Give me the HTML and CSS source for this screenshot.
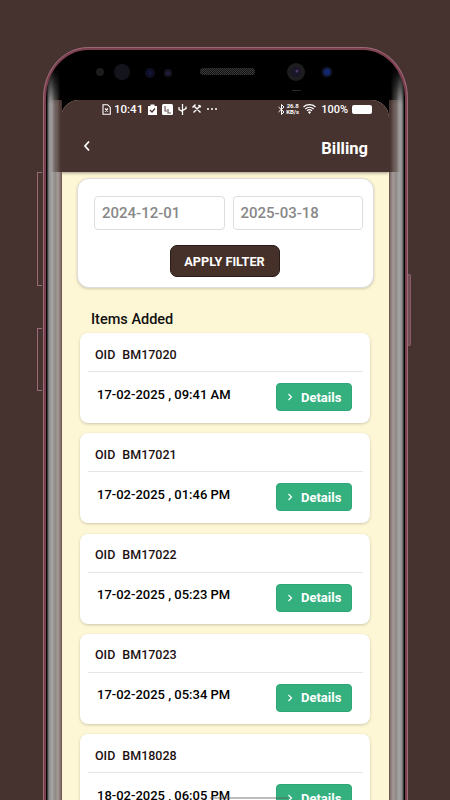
FILE: index.html
```html
<!DOCTYPE html>
<html lang="en">
<head>
    <meta charset="UTF-8">
    <meta name="viewport" content="width=device-width, initial-scale=1.0">
    <title>Billing</title>
    <link rel="stylesheet" href="styles.css">
</head>
<body>
	<div class="buttonLeft buttonLeftTop"></div>
	<div class="buttonLeft buttonLeftBottom"></div>
	<div class="buttonRight"></div>
	<div class="phone">
		<svg class="sensors" width="359" height="50" viewBox="0 0 359 50">
			<defs>
				<pattern id="mesh" width="2" height="2" patternUnits="userSpaceOnUse">
					<rect width="2" height="2" fill="#111"/>
					<rect width="1" height="1" fill="#3c3c3c"/>
					<rect x="1" y="1" width="1" height="1" fill="#3c3c3c"/>
				</pattern>
			</defs>
			<circle cx="54" cy="22" r="4" fill="#1c1c1e"/>
			<circle cx="76" cy="22" r="8" fill="#14141c"/>
			<circle cx="104" cy="23" r="5" fill="#0e0e24"/>
			<circle cx="104" cy="23" r="2" fill="#14143a"/>
			<circle cx="122" cy="23" r="4" fill="#15151f"/>
			<circle cx="122" cy="23" r="1.5" fill="#22224a"/>
			<rect x="154" y="18" width="55" height="7" rx="3" fill="url(#mesh)"/>
			<circle cx="250" cy="22" r="9" fill="#1d1d1f"/>
			<circle cx="250" cy="22" r="5" fill="#1a1528"/>
			<circle cx="251" cy="21" r="1.5" fill="#4a3a6a"/>
			<circle cx="281" cy="22" r="5.5" fill="#10131f"/>
			<circle cx="281" cy="22" r="3.5" fill="#12266e"/>
			<rect x="246" y="40" width="9" height="1" fill="#2a2a2a"/>
		</svg>
		<div class="bezel bezelLeft"></div>
		<div class="bezel bezelRight"></div>
		<div class="screen">
			<header class="appHeader">
				<div class="statusBar">
					<div class="statusGroup">
						<svg width="9" height="11" viewBox="0 0 9 11"><path d="M1 .7h4.600L8.300 3.400V10.300H1z" fill="none" stroke="#fff" stroke-width="1.100"/><path d="M3 4.500l3 3M6 4.500l-3 3" stroke="#fff" stroke-width="1.100"/></svg>
						<span class="statusTime">10:41</span>
						<svg class="gapIcon" width="9" height="11" viewBox="0 0 9 11"><path d="M0 2h2.500V.5h4V2H9v9H0z" fill="#fff"/><path d="M2 6l2 2 3-3.500" fill="none" stroke="#46322e" stroke-width="1.200"/></svg>
						<svg class="gapIcon" width="11" height="11" viewBox="0 0 11 11"><rect width="11" height="11" rx="1.500" fill="#fff"/><path d="M3 2v5h2M6 5v4h3" fill="none" stroke="#6a5a56" stroke-width="1.200"/></svg>
						<svg class="gapIcon" width="9" height="11" viewBox="0 0 9 11"><path d="M4.500 0v11M1 3v2.500l3.500 2M8 2.500v2l-3.500 2" fill="none" stroke="#fff" stroke-width="1.300"/></svg>
						<svg class="gapIcon" width="10" height="10" viewBox="0 0 10 10"><path d="M1.500 1.500l7 7M8.500 1.500l-7 7M.5 3.500l3-3M6.500 1l2.500 2" fill="none" stroke="#fff" stroke-width="1.400"/></svg>
						<span class="statusDots">
							<i></i><i></i><i></i>
						</span>
					</div>
					<div class="statusGroup">
						<svg width="7" height="11" viewBox="0 0 7 11"><path d="M.5 3l5.500 5-2.500 2.500V.5L6 3 .5 8" fill="none" stroke="#fff" stroke-width="1"/></svg>
						<span class="netSpeed"><b>26.8</b><b>KB/s</b></span>
						<svg class="wifi" width="13" height="10" viewBox="0 0 13 10"><path d="M.5 3a9 9 0 0 1 12 0M2.300 5a6.300 6.300 0 0 1 8.400 0M4 6.900a3.600 3.600 0 0 1 5 0" fill="none" stroke="#fff" stroke-width="1.200"/><path d="M6.500 10l-1.500-1.800a2 2 0 0 1 3 0z" fill="#fff"/></svg>
						<span class="statusPct">100%</span>
						<span class="battery"></span>
					</div>
				</div>
				<div class="titleRow">
					<svg class="backIcon" width="8" height="12" viewBox="0 0 8 12"><path d="M6 1.500L2 6l4 4.500" fill="none" stroke="#fff" stroke-width="1.800"/></svg>
					<h1>Billing</h1>
				</div>
			</header>

			<main class="content">
				<div class="filterCard">
					<div class="dateRow">
						<div class="dateInput">2024-12-01</div>
						<div class="dateInput">2025-03-18</div>
					</div>
					<button class="applyBtn">APPLY FILTER</button>
				</div>

				<h2 class="itemsTitle">Items Added</h2>

				<div class="orderList">
					<div class="orderCard">
						<div class="orderId"><span>OID</span><span>BM17020</span></div>
						<div class="orderRow">
							<span class="orderDate">17-02-2025 , 09:41 AM</span>
							<button class="detailsBtn"><svg width="6" height="8" viewBox="0 0 6 8"><path d="M1.500 1l3 3-3 3" fill="none" stroke="#fff" stroke-width="1.200"/></svg>Details</button>
						</div>
					</div>
					<div class="orderCard">
						<div class="orderId"><span>OID</span><span>BM17021</span></div>
						<div class="orderRow">
							<span class="orderDate">17-02-2025 , 01:46 PM</span>
							<button class="detailsBtn"><svg width="6" height="8" viewBox="0 0 6 8"><path d="M1.500 1l3 3-3 3" fill="none" stroke="#fff" stroke-width="1.200"/></svg>Details</button>
						</div>
					</div>
					<div class="orderCard">
						<div class="orderId"><span>OID</span><span>BM17022</span></div>
						<div class="orderRow">
							<span class="orderDate">17-02-2025 , 05:23 PM</span>
							<button class="detailsBtn"><svg width="6" height="8" viewBox="0 0 6 8"><path d="M1.500 1l3 3-3 3" fill="none" stroke="#fff" stroke-width="1.200"/></svg>Details</button>
						</div>
					</div>
					<div class="orderCard">
						<div class="orderId"><span>OID</span><span>BM17023</span></div>
						<div class="orderRow">
							<span class="orderDate">17-02-2025 , 05:34 PM</span>
							<button class="detailsBtn"><svg width="6" height="8" viewBox="0 0 6 8"><path d="M1.500 1l3 3-3 3" fill="none" stroke="#fff" stroke-width="1.200"/></svg>Details</button>
						</div>
					</div>
					<div class="orderCard">
						<div class="orderId"><span>OID</span><span>BM18028</span></div>
						<div class="orderRow">
							<span class="orderDate">18-02-2025 , 06:05 PM</span>
							<button class="detailsBtn"><svg width="6" height="8" viewBox="0 0 6 8"><path d="M1.500 1l3 3-3 3" fill="none" stroke="#fff" stroke-width="1.200"/></svg>Details</button>
						</div>
					</div>
				</div>
			</main>
		</div>
		<div class="homeBar"></div>
	</div>
</body>
</html>
```

FILE: styles.css
```css
html, body { margin: 0; height: 800px; overflow: hidden; }
body { background: #46322e; font-family: Roboto, "Liberation Sans", sans-serif; padding: 48px 0 0 44px; box-sizing: border-box; position: relative; }

/* phone frame */
.phone { position: relative; width: 363px; height: 800px; box-sizing: border-box; background: #000; border: 2px solid #7c3f50; border-bottom: 0; border-radius: 44px 44px 0 0 / 50px 50px 0 0; overflow: hidden; box-shadow: 0 0 0 1px #9a6a78; }
.sensors { display: block; }
.bezel { position: absolute; top: 14px; bottom: 0; width: 15px; z-index: 2; }
.bezelLeft { left: 1px; background: linear-gradient(to right, #222 0, #8c8a8a 2px, #a8a6a6 5px, #8d8987 8px, #a69a96 11px, #7b6b67 14px, #5c4a46 15px); -webkit-mask-image: linear-gradient(to bottom, transparent 4px, #000 40px); }
.bezelRight { right: 1px; background: linear-gradient(to left, #222 0, #8c8a8a 2px, #a8a6a6 5px, #8d8987 8px, #a69a96 11px, #7b6b67 14px, #5c4a46 15px); -webkit-mask-image: linear-gradient(to bottom, transparent 4px, #000 40px); }
/* the glass goes dark towards the notch, then takes the header colour */
.bezel::before { content: ""; position: absolute; left: 0; right: 0; top: 0; height: 36px; }
.bezel::after { content: ""; position: absolute; left: 0; right: 0; top: 36px; height: 72px; }
.bezelLeft::before { background: linear-gradient(to right, transparent 25%, #000 90%); }
.bezelRight::before { background: linear-gradient(to left, transparent 25%, #000 90%); }
.bezelLeft::after { background: linear-gradient(to right, transparent 25%, #46322e 95%); }
.bezelRight::after { background: linear-gradient(to left, transparent 25%, #46322e 95%); }

.buttonLeft { position: absolute; left: 37px; width: 5px; border: 1px solid #9a6a78; border-right: 0; background: #46322e; box-sizing: border-box; }
.buttonLeftTop { top: 172px; height: 114px; }
.buttonLeftBottom { top: 328px; height: 63px; }
.buttonRight { position: absolute; left: 407px; top: 274px; width: 4px; height: 72px; background: #6e4f56; border: 1px solid #8a5a68; border-left: 0; box-sizing: border-box; border-radius: 0 2px 2px 0; }

.screen { margin: 0 16px 0 15px; height: 750px; display: flex; flex-direction: column; background: #fef7d6; border-radius: 18px 18px 0 0; overflow: hidden; }

/* header + status bar */
.appHeader { background: #46322e; height: 72px; flex: none; box-shadow: 0 1px 3px rgba(0,0,0,0.4); position: relative; }
.statusBar { display: flex; justify-content: space-between; align-items: center; height: 18px; padding: 0 17px 0 41px; color: #fff; }
.statusGroup { display: flex; align-items: center; }
.statusTime { font-size: 11.500px; font-weight: 500; margin-left: 3px; }
.gapIcon { margin-left: 5px; }
.statusDots { display: flex; gap: 2px; margin-left: 5px; }
.statusDots i { width: 2px; height: 2px; background: #fff; border-radius: 50%; }
.netSpeed { display: flex; flex-direction: column; font-size: 6px; line-height: 6px; margin-left: 1px; text-align: center; }
.netSpeed b { font-weight: 700; }
.wifi { margin-left: 4px; }
.statusPct { font-size: 11px; font-weight: 500; margin-left: 5px; }
.battery { width: 20px; height: 9px; background: #fff; border-radius: 2px; margin-left: 4px; }
.titleRow { display: flex; justify-content: space-between; align-items: center; padding: 17px 21px 0 22px; color: #fff; }
.titleRow h1 { margin: 0; font-size: 16.500px; font-weight: 700; line-height: 28px; }
.backIcon { margin-top: -7px; }

/* filter */
.content { padding: 6px 15px 0 16px; }
.filterCard { background: #fff; border: 1px solid #ddd; border-radius: 12px; box-shadow: 0 1px 3px rgba(0,0,0,0.18); height: 110px; box-sizing: border-box; padding-top: 17px; display: flex; flex-direction: column; align-items: center; }
.dateRow { display: flex; gap: 8px; width: 100%; box-sizing: border-box; padding: 0 10px 0 16px; }
.dateInput { flex: 1; height: 34px; box-sizing: border-box; border: 1px solid #ddd; border-radius: 4px; padding: 0 7px; font-size: 15px; font-weight: 500; line-height: 33px; color: #888; }
.applyBtn { margin: 15px 2px 0 0; width: 110px; height: 32px; background: #46302a; color: #fff; border: 1px solid #2a1c18; border-radius: 7px; font-family: inherit; font-size: 12.700px; font-weight: 700; }

.itemsTitle { margin: 22px 0 0 14px; font-size: 14.500px; font-weight: 500; line-height: 20px; color: #111; }

/* orders */
.orderList { display: flex; flex-direction: column; gap: 10.300px; margin: 3px 4px 0 3px; }
.orderCard { background: #fff; border-radius: 8px; height: 90px; flex: none; box-shadow: 0 1px 3px rgba(0,0,0,0.2); padding: 0 7px 0 8px; box-sizing: border-box; }
.orderId { display: flex; gap: 7px; height: 39px; box-sizing: border-box; align-items: center; padding: 4px 0 0 7px; border-bottom: 1px solid #e6e6e6; font-size: 12.500px; font-weight: 500; color: #1c1010; }
.orderRow { display: flex; justify-content: space-between; align-items: center; padding: 11px 11px 0 9px; }
.orderDate { font-size: 13px; font-weight: 500; color: #000; margin-top: -6px; }
.detailsBtn { display: flex; align-items: center; gap: 8px; width: 76px; height: 28px; padding: 0 0 0 10px; background: #34b07f; border: 1px solid #2fa677; border-radius: 4px; color: #fff; font-family: inherit; font-size: 13px; font-weight: 700; box-sizing: border-box; }

.homeBar { position: absolute; left: 164px; top: 747px; width: 78px; height: 2px; background: rgba(90,90,90,0.4); }
```
